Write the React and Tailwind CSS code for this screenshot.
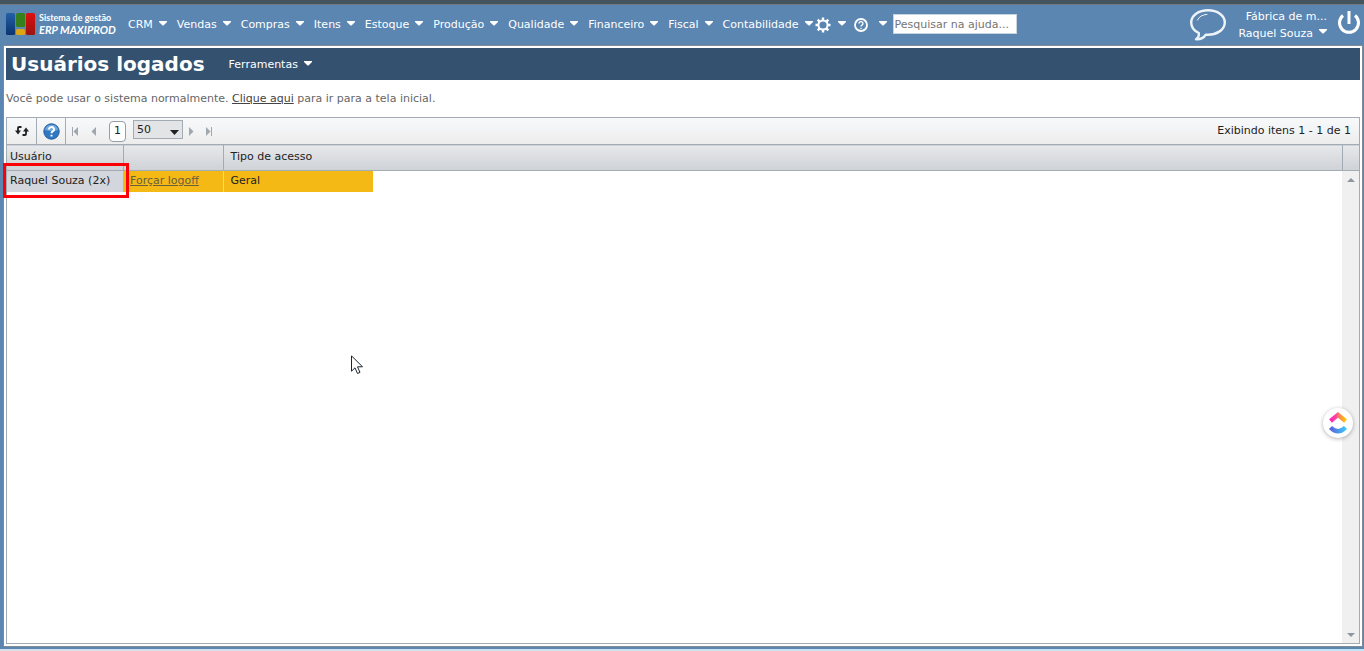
const MENUS = ['CRM', 'Vendas', 'Compras', 'Itens', 'Estoque', 'Produção', 'Qualidade', 'Financeiro', 'Fiscal', 'Contabilidade'];

function Caret() {
  return (
    <svg width="8" height="5" viewBox="0 0 8 5" fill="currentColor" className="mb-1 shrink-0" aria-hidden="true">
      <path d="M0 0h8v1L4.500 4.500h-1L0 1z" />
    </svg>
  );
}

function Logo() {
  return (
    <a href="#" className="-mt-0.5 flex w-[122px] shrink-0 items-center gap-[3px] font-['Lato',sans-serif] font-bold text-white">
      <svg width="30" height="22" viewBox="0 0 30 22" className="shrink-0" aria-hidden="true">
        <defs>
          <linearGradient id="logoBlue" x2="0" y2="1">
            <stop stopColor="#2260a8" />
            <stop offset="1" stopColor="#0c3470" />
          </linearGradient>
          <linearGradient id="logoRed" x2="0" y2="1">
            <stop stopColor="#dd1010" />
            <stop offset="1" stopColor="#9c1410" />
          </linearGradient>
        </defs>
        <rect width="9" height="22" rx="1.5" fill="url(#logoBlue)" />
        <rect x="10" width="9" height="14" rx="1.5" fill="#35801c" />
        <rect x="10" y="16" width="9" height="6" rx="1.5" fill="#dba514" />
        <rect x="20" width="9" height="22" rx="1.5" fill="url(#logoRed)" />
      </svg>
      <span className="flex flex-col whitespace-nowrap">
        <span className="text-[9px] leading-[11px]">Sistema de gestão</span>
        <span className="text-[11px] leading-[13px] italic">ERP MAXIPROD</span>
      </span>
    </a>
  );
}

function Gear() {
  return (
    <svg width="16" height="16" viewBox="0 0 16 16" fill="none" stroke="currentColor" aria-hidden="true">
      <circle cx="8" cy="8" r="4.6" strokeWidth="2" />
      <path
        d="M8 .5v2.4M8 13.1v2.4M.5 8h2.4M13.1 8h2.4M2.7 2.7l1.7 1.7M11.6 11.6l1.7 1.7M13.3 2.7l-1.7 1.7M4.4 11.6l-1.7 1.7"
        strokeWidth="2.4"
      />
    </svg>
  );
}

function HelpRing() {
  return (
    <svg width="14" height="14" viewBox="0 0 14 14" fill="none" stroke="currentColor" aria-hidden="true">
      <circle cx="7" cy="7" r="6" strokeWidth="1.8" />
      <path d="M5 5.6a2 1.9 0 1 1 3 1.5Q7 7.6 7 8.6M7 9.7v1.4" strokeWidth="1.3" />
    </svg>
  );
}

function Header() {
  return (
    <header className="flex h-10 shrink-0 items-center pl-1.5 pr-[3px] text-[11px] text-white">
      <Logo />
      <nav className="flex items-center gap-2.5">
        {MENUS.map((m) => (
          <button key={m} type="button" className="flex items-center gap-1.5">
            {m} <Caret />
          </button>
        ))}
      </nav>
      <button type="button" aria-label="Configurações" className="ml-0.5 flex items-center gap-[7px]">
        <Gear /> <Caret />
      </button>
      <button type="button" aria-label="Ajuda" className="ml-2 flex items-center gap-[11px]">
        <HelpRing /> <Caret />
      </button>
      <input
        type="text"
        aria-label="Pesquisar na ajuda"
        placeholder="Pesquisar na ajuda..."
        className="-mt-0.5 ml-1.5 h-5 w-[124px] border border-[#c8d4e0] bg-white px-px text-[11px] text-black placeholder:text-[#757575]"
      />
      <div className="ml-auto flex items-center">
        <button type="button" aria-label="Conversas">
          <svg width="36" height="32" viewBox="0 0 36 32" fill="none" stroke="#eef3f8" aria-hidden="true">
            <path
              d="M18 1.2C8.600 1.200 1.200 6.500 1.200 13.500c0 4.600 3.200 8.500 7.600 10.500.4 2.600-.6 4.800-2.800 6.200 4.400.2 8-1.600 9.800-4.600 10.600.8 19-4.700 19-12.100C34.800 6.500 27.400 1.200 18 1.200z"
              strokeWidth="2.400"
              strokeLinejoin="round"
            />
            <path d="M7.500 11c1.500-3.500 5-5.300 9.500-5.600" strokeWidth="1" strokeLinecap="round" />
          </svg>
        </button>
        <button type="button" className="ml-3 flex flex-col items-end leading-[17px]">
          <span>Fábrica de m...</span>
          <span className="flex items-center gap-1.5">
            Raquel Souza <Caret />
          </span>
        </button>
        <button type="button" aria-label="Sair" className="-mt-1 ml-2.5">
          <svg width="24" height="26" viewBox="0 0 24 26" fill="none" stroke="currentColor" strokeWidth="3" aria-hidden="true">
            <path d="M6 5.500a9.500 9.500 0 1 0 12 0M12 1v13" />
          </svg>
        </button>
      </div>
    </header>
  );
}

function PagerIcon({ bar, flip }) {
  return (
    <svg width="8" height="9" viewBox="0 0 8 9" fill="#a0a7ae" className={flip ? '-scale-x-100' : ''} aria-hidden="true">
      <path d="M6 0v9L1.500 4.500z" />
      {bar && <path d="M0 0h1v9H0z" />}
    </svg>
  );
}

function Toolbar() {
  return (
    <div className="flex h-[26px] shrink-0 items-center bg-linear-to-b from-[#f8f9fa] to-[#ededee] text-[11px] text-[#222]">
      <button type="button" aria-label="Atualizar" className="flex h-full w-[30px] items-center justify-center border-r border-[#a3abb5]">
        <svg width="14" height="10" viewBox="0 0 14 10" fill="none" stroke="#222" strokeWidth="1.800" aria-hidden="true">
          <path d="M6.500 1H4q-1 0-1 1v4M7.500 9H10q1 0 1-1V4" />
          <path d="M0 4.500h6L3 8.500zM8 5.500h6L11 1.500z" fill="#222" stroke="none" />
        </svg>
      </button>
      <button type="button" aria-label="Ajuda da tela" className="flex h-full w-[29px] items-center justify-center border-r border-[#a3abb5]">
        <svg width="17" height="17" viewBox="0 0 17 17" fill="none" aria-hidden="true">
          <circle cx="8.500" cy="8.500" r="7.700" fill="#2f77c2" stroke="#235b9b" />
          <path d="M2 7a6.600 6.300 0 0 1 13 0q-6 2-13 0z" fill="#72a8dd" />
          <path d="M6 6.400a2.500 2.300 0 1 1 3.700 2Q8.500 9 8.500 10.300M8.500 11.700v1.900" stroke="#fff" strokeWidth="1.900" />
        </svg>
      </button>
      <button type="button" aria-label="Primeira página" className="ml-1.5"><PagerIcon bar /></button>
      <button type="button" aria-label="Página anterior" className="ml-2.5"><PagerIcon /></button>
      <button type="button" className="ml-[11px] h-[21px] w-[17px] rounded border border-[#949ea9] bg-white">1</button>
      <span className="relative -mt-[3px] ml-[7px] flex">
        <select
          aria-label="Itens por página"
          defaultValue="50"
          className="h-[19px] w-[50px] appearance-none border border-[#a3abb5] bg-[#e3e4e6] pl-[3px] text-[11px] leading-4"
        >
          <option>20</option>
          <option>50</option>
          <option>100</option>
        </select>
        <svg width="9" height="5" viewBox="0 0 9 5" fill="#222" className="pointer-events-none absolute right-1 bottom-1" aria-hidden="true">
          <path d="M0 0h9L4.500 5z" />
        </svg>
      </span>
      <button type="button" aria-label="Próxima página" className="ml-1"><PagerIcon flip /></button>
      <button type="button" aria-label="Última página" className="ml-[9px]"><PagerIcon bar flip /></button>
      <span className="ml-auto pr-2">Exibindo itens 1 - 1 de 1</span>
    </div>
  );
}

function UserTable() {
  return (
    <table className="w-full table-fixed border-collapse text-left text-[11px] text-[#222]">
      <colgroup>
        <col className="w-[116px]" />
        <col className="w-[100px]" />
        <col className="w-[150px]" />
        <col />
        <col className="w-[17px]" />
      </colgroup>
      <thead>
        <tr className="h-[26px] border-y border-[#a3abb5] bg-linear-to-b from-[#e6e8eb] to-[#cfd2d6]">
          <th className="border-r border-[#a3abb5] pl-[3px] font-normal">Usuário</th>
          <th className="border-r border-[#a3abb5]" />
          <th className="pl-[7px] font-normal">Tipo de acesso</th>
          <th className="border-r border-[#a3abb5]" />
          <th />
        </tr>
      </thead>
      <tbody>
        <tr className="h-[21px]">
          <td className="relative bg-[#d3d6dc] pl-[3px]">
            Raquel Souza (2x)
            <span className="pointer-events-none absolute -top-2 -left-1 h-[35px] w-[126px] border-3 border-[#fb0007]" />
          </td>
          <td className="border-r border-[#f8d98a] bg-[#f5b916] pl-[7px]">
            <a href="#" className="text-[#66603f] underline">Forçar logoff</a>
          </td>
          <td className="bg-[#f5b916] pl-[7px]">Geral</td>
          <td />
          <td />
        </tr>
      </tbody>
    </table>
  );
}

function ScrollTrack() {
  return (
    <div className="absolute top-[53px] right-0 bottom-0 flex w-[17px] flex-col items-center justify-between bg-[#f0f0f1] pt-[7px] pb-1.5">
      <svg width="8" height="4" viewBox="0 0 8 4" fill="#9096a0" aria-hidden="true"><path d="M0 4h8L4 0z" /></svg>
      <svg width="8" height="4" viewBox="0 0 8 4" fill="#9096a0" aria-hidden="true"><path d="M0 0h8L4 4z" /></svg>
    </div>
  );
}

function ClickUpBadge() {
  return (
    <button
      type="button"
      aria-label="ClickUp"
      className="absolute top-[408px] right-[11px] flex h-[30px] w-[30px] items-center justify-center rounded-full bg-white shadow-[0_1px_4px_rgba(0,0,0,0.3)]"
    >
      <svg width="20" height="24" viewBox="0 0 20 24" fill="none" strokeWidth="4.400" aria-hidden="true">
        <defs>
          <linearGradient id="roof">
            <stop stopColor="#ff22b8" />
            <stop offset=".4" stopColor="#fa4f94" />
            <stop offset=".55" stopColor="#f5805c" />
            <stop offset="1" stopColor="#ffc400" />
          </linearGradient>
          <linearGradient id="bowl">
            <stop stopColor="#5b62dc" />
            <stop offset="1" stopColor="#3cc8f5" />
          </linearGradient>
        </defs>
        <path d="M2.500 10 10 3.800l7.500 6.200" stroke="url(#roof)" />
        <path d="M2.500 16.500q7.500 7.500 15 0" stroke="url(#bowl)" />
      </svg>
    </button>
  );
}

function Pointer() {
  return (
    <svg width="12" height="20" viewBox="0 0 12 20" className="pointer-events-none absolute top-[355px] left-[351px]" aria-hidden="true">
      <path d="M.5.8v15.400l3.500-3.400 2.500 5.700 2.500-1.100-2.500-5.600h5z" fill="#fff" stroke="#1c2430" />
    </svg>
  );
}

export default function App() {
  return (
    <div className="relative flex h-screen flex-col overflow-hidden bg-[#5b86b2] font-['DejaVu_Sans',Verdana,sans-serif]">
      <div className="h-[5px] shrink-0 border-b border-[#707880] bg-[#44545e]" />
      <Header />
      <main className="mr-px ml-[3px] flex min-h-0 flex-1 flex-col border border-[#7f8a94] bg-white p-0.5">
        <div className="flex h-8 shrink-0 items-center bg-[#34526f] pl-[5px] text-white">
          <h1 className="text-xl font-bold">Usuários logados</h1>
          <button type="button" className="ml-6 flex items-center gap-1.5 pt-0.5 text-[11px]">
            Ferramentas <Caret />
          </button>
        </div>
        <p className="flex h-[37px] shrink-0 items-center pt-0.5 text-[11px] whitespace-pre text-[#666]">
          Você pode usar o sistema normalmente. <a href="#" className="text-[#444] underline">Clique aqui</a> para ir para a tela inicial.
        </p>
        <section className="relative flex min-h-0 flex-1 flex-col border border-[#a3abb5]">
          <Toolbar />
          <UserTable />
          <ScrollTrack />
        </section>
      </main>
      <div className="mt-0.5 h-0.5 shrink-0 bg-linear-to-r from-[#d5e0ee] to-[#c3e4f5]" />
      <Pointer />
      <ClickUpBadge />
    </div>
  );
}
